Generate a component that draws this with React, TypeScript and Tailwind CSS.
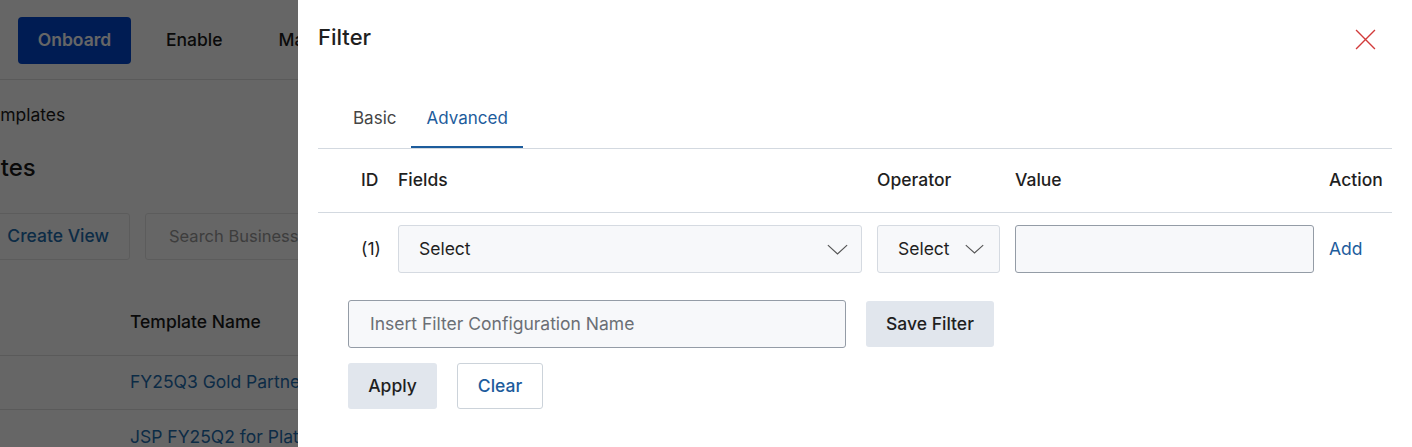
import React from "react";

const ChevronDown = ({ className = "" }: { className?: string }) => (
  <svg viewBox="0 0 24 12" className={className} fill="none" stroke="currentColor" strokeWidth={1.4}>
    <path d="M1 1l11 10L23 1" />
  </svg>
);

const CloseIcon = () => (
  <svg viewBox="0 0 20 20" className="w-[21px] h-[21px] text-[#d23b3b]" fill="none" stroke="currentColor" strokeWidth={1.3}>
    <path d="M1 1l18 18M19 1L1 19" />
  </svg>
);

// page behind the drawer, dimmed by the overlay
function BackgroundPage() {
  return (
    <div className="w-[1412px] h-[447px] bg-white text-[#1a1a1a] text-[17.5px]">
      <div className="h-[80px] border-b border-[#e2e2e2] flex items-center pl-[18px]">
        <div className="mt-[2px] h-[47px] w-[113px] rounded-[4px] bg-[#0048d0] flex items-center justify-center font-semibold text-white">
          Onboard
        </div>
        <span className="ml-[35px] mt-[2px] font-medium">Enable</span>
        <span className="ml-[56px] mt-[2px] font-medium">Manage</span>
      </div>
      <div className="mt-[23px] -ml-[20px] leading-[24px]">Templates</div>
      <div className="mt-[26px] -ml-[83px] text-[24px] leading-[30px] font-medium">Templates</div>
      <div className="mt-[30px] flex items-center">
        <div className="h-[47px] w-[160px] -ml-[30px] border border-[#e6e6e6] rounded-[3px] flex items-center justify-end pr-[20px] font-medium text-[#1f6eb0]">
          Create View
        </div>
        <div className="ml-[15px] h-[47px] w-[300px] border border-[#e6e6e6] rounded-[3px] flex items-center pl-[23px] text-[16.5px] text-[#9a9a9a]">
          Search Business Templates
        </div>
      </div>
      <div className="mt-[30px] h-[66px] border-b border-[#e2e2e2] flex items-center pl-[130px] font-medium">
        Template Name
      </div>
      <div className="h-[54px] border-b border-[#e2e2e2] flex items-center pl-[130px] text-[#1f6eb0]">
        FY25Q3 Gold Partner Templates
      </div>
      <div className="h-[54px] flex items-center pl-[130px] text-[#1f6eb0]">
        JSP FY25Q2 for Platinum Partners
      </div>
    </div>
  );
}

function FilterDrawer() {
  return (
    <div className="absolute inset-y-0 right-0 w-[1114px] bg-white px-5 text-[#1f1f1f] text-[17.5px]">
      <div className="flex items-center justify-between pt-[22px] pr-[16px]">
        <h2 className="text-[22px] leading-[30px] font-medium">Filter</h2>
        <button className="mt-[5px]"><CloseIcon /></button>
      </div>

      <div className="mt-[46px] flex border-b border-[#d3d9e0] pl-[20px] text-[17px]">
        <button className="px-[15px] pt-[8px] pb-[18px] leading-[24px] text-[#454545]">Basic</button>
        <button className="px-[15px] pt-[8px] pb-[16px] leading-[24px] text-[#1d5c9c] border-b-2 border-[#1d5c9c]">
          Advanced
        </button>
      </div>

      <div className="flex items-center h-[64px] border-b border-[#d3d9e0] font-medium">
        <div className="w-[80px] pl-[43px]">ID</div>
        <div className="w-[479px]">Fields</div>
        <div className="w-[138px]">Operator</div>
        <div className="w-[314px]">Value</div>
        <div className="flex-1">Action</div>
      </div>

      <div className="flex items-center py-3">
        <div className="w-[80px] pl-[43px]">(1)</div>
        <div className="w-[479px]">
          <div className="h-[48px] w-[464px] rounded-[3px] border border-[#d5dae1] bg-[#f7f8fa] flex items-center justify-between pl-[20px] pr-[13px]">
            <span>Select</span>
            <ChevronDown className="w-[21px] h-[11px] text-[#555]" />
          </div>
        </div>
        <div className="w-[138px]">
          <div className="h-[48px] w-[123px] rounded-[3px] border border-[#d5dae1] bg-[#f7f8fa] flex items-center justify-between pl-[20px] pr-[15px]">
            <span>Select</span>
            <ChevronDown className="w-[19px] h-[10px] text-[#555]" />
          </div>
        </div>
        <div className="w-[314px]">
          <div className="h-[48px] w-[299px] rounded-[3px] border border-[#949ca6] bg-[#f7f8fa]" />
        </div>
        <div className="flex-1 text-[#1d5c9c]">Add</div>
      </div>

      <div className="mt-[15px] ml-[30px] flex items-center gap-[20px]">
        <div className="h-[48px] w-[498px] rounded-[3px] border border-[#949ca6] bg-[#f7f8fa] flex items-center pl-[21px] text-[#6b6f75]">
          Insert Filter Configuration Name
        </div>
        <button className="h-[46px] w-[128px] rounded-[3px] bg-[#e1e6ed] font-medium">Save Filter</button>
      </div>

      <div className="mt-[15px] ml-[30px] flex items-center gap-[20px]">
        <button className="h-[46px] w-[89px] rounded-[3px] bg-[#e1e6ed] font-medium">Apply</button>
        <button className="h-[46px] w-[86px] rounded-[3px] border border-[#ccd3da] bg-white text-[#1d5c9c] font-medium">Clear</button>
      </div>
    </div>
  );
}

export default function App() {
  return (
    <div className="relative w-[1412px] h-[447px] overflow-hidden" style={{ fontFamily: "Inter, 'Noto Sans', sans-serif" }}>
      <BackgroundPage />
      <div className="absolute inset-0 bg-black/60" />
      <FilterDrawer />
    </div>
  );
}
